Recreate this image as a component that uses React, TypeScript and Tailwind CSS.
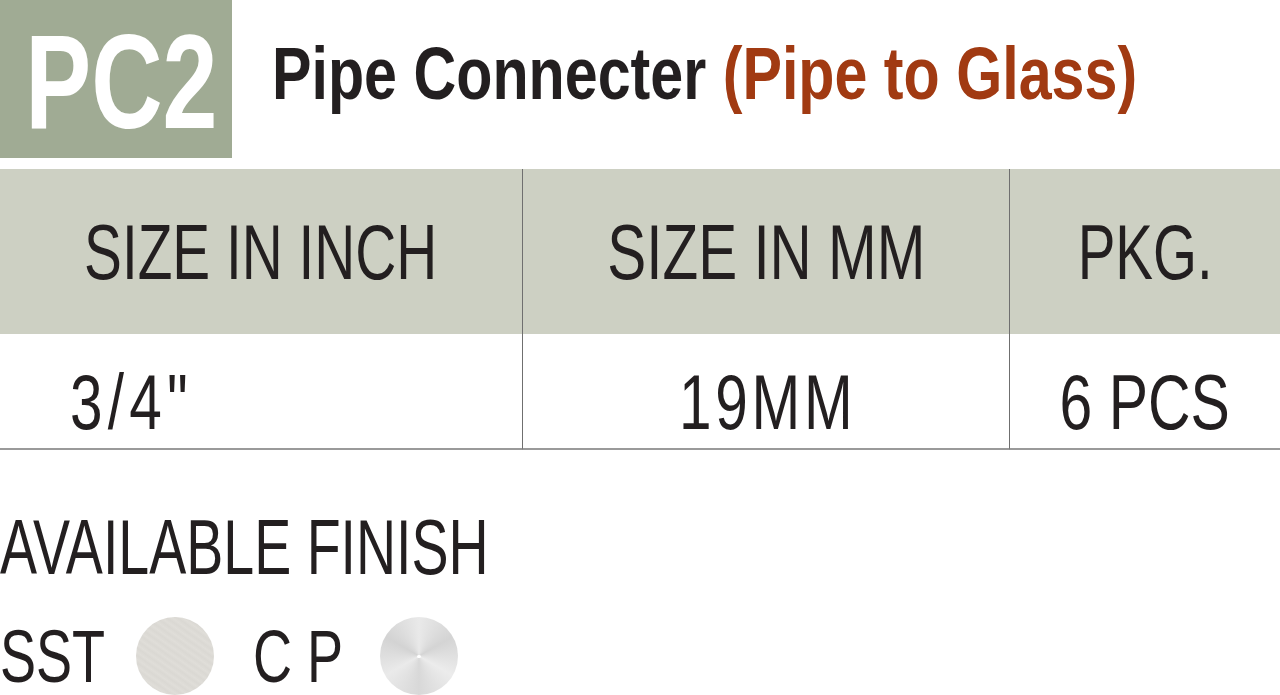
import React from "react";

const sans = "font-['Liberation_Sans',Arial,sans-serif]";

export default function App() {
  return (
    <div className={`w-[1280px] h-[695px] bg-white overflow-hidden text-[#231f20] ${sans}`}>
      {/* Title row */}
      <div className="flex h-[158px]">
        <div className="w-[232px] h-[158px] shrink-0 bg-[#a0ab94] flex justify-center pt-[15px]">
          <span className="block text-[134px] leading-none font-bold text-white scale-x-[0.737] translate-x-[5px] whitespace-nowrap">
            PC2
          </span>
        </div>
        <div className="ml-[40px] shrink-0 pt-[37px] text-[74px] leading-none font-bold whitespace-nowrap origin-left scale-x-[0.8]">
          <span>Pipe Connecter </span>
          <span className="text-[#a13a12]">(Pipe to Glass)</span>
        </div>
      </div>

      {/* Table */}
      <div className="mt-[11px] grid grid-cols-[522px_487px_271px] text-[78px] leading-none">
        <div className="h-[165px] bg-[#cdd0c3] flex items-center justify-center">
          <span className="block whitespace-nowrap scale-x-[0.728]">SIZE IN INCH</span>
        </div>
        <div className="h-[165px] bg-[#cdd0c3] border-l border-[#6f6f6f] flex items-center justify-center">
          <span className="block whitespace-nowrap scale-x-[0.749]">SIZE IN MM</span>
        </div>
        <div className="h-[165px] bg-[#cdd0c3] border-l border-[#6f6f6f] flex items-center justify-center">
          <span className="block whitespace-nowrap scale-x-[0.725]">PKG.</span>
        </div>

        <div className="h-[116px] border-b-2 border-[#9a9a9a] pt-[29px] pl-[70px]">
          <span className="block whitespace-nowrap origin-left scale-x-[0.75] tracking-[7px]">3/4"</span>
        </div>
        <div className="h-[116px] border-b-2 border-[#9a9a9a] border-l border-l-[#6f6f6f] pt-[29px] flex justify-center">
          <span className="block whitespace-nowrap scale-x-[0.75] tracking-[5px] pl-[5px]">19MM</span>
        </div>
        <div className="h-[116px] border-b-2 border-[#9a9a9a] border-l border-l-[#6f6f6f] pt-[29px] flex justify-center">
          <span className="block whitespace-nowrap scale-x-[0.755]">6 PCS</span>
        </div>
      </div>

      {/* Available finish */}
      <div className="mt-[58px] text-[78px] leading-none whitespace-nowrap">
        <span className="block origin-left scale-x-[0.712]">AVAILABLE FINISH</span>
      </div>

      <div className="mt-[31px] flex items-start h-[78px]">
        <div className="shrink-0 mr-[-39px] pt-[3px] text-[74px] leading-none whitespace-nowrap origin-left scale-x-[0.73]">
          SST
        </div>
        <div className="ml-[31px] w-[78px] h-[78px] shrink-0 rounded-full bg-[#dcdad5] bg-[repeating-linear-gradient(35deg,#dfddd8_0px,#dad8d3_3px,#e0ded9_6px)]" />
        <div className="ml-[39px] shrink-0 mr-[-33px] pt-[3px] text-[74px] leading-none whitespace-nowrap origin-left scale-x-[0.73]">
          C P
        </div>
        <div className="ml-[37px] w-[78px] h-[78px] shrink-0 rounded-full bg-[conic-gradient(#e9e9e9,#d4d4d4,#ececec,#d8d8d8,#eaeaea,#d3d3d3,#e9e9e9)] flex items-center justify-center">
          <div className="w-[4px] h-[3px] rounded-full bg-white" />
        </div>
      </div>
    </div>
  );
}
